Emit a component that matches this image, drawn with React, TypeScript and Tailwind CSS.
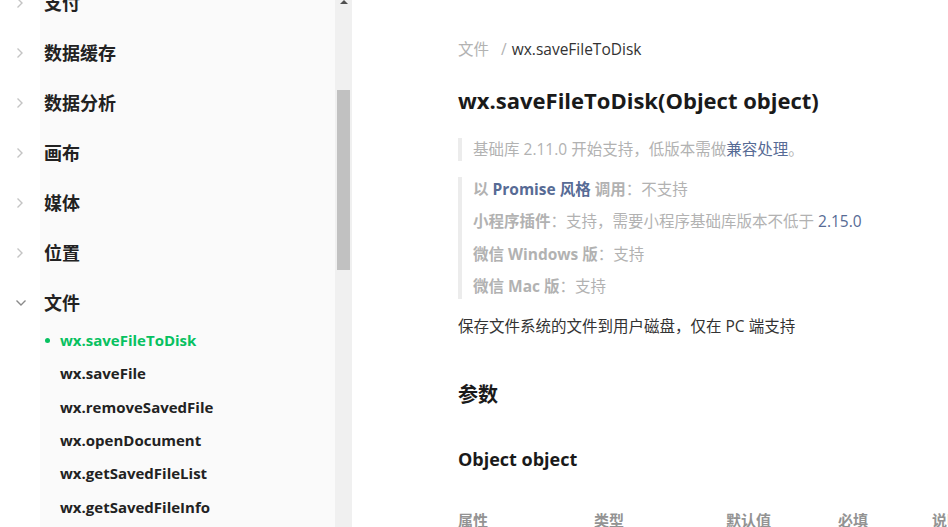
import React from "react";

const FONT = { fontFamily: '"Open Sans", "Noto Sans CJK SC", sans-serif' };

function ChevronRight() {
  return (
    <svg width="8" height="12" viewBox="0 0 8 12" fill="none">
      <path d="M1.5 1.5 L6 6 L1.5 10.5" stroke="#c4c4c4" strokeWidth="1.4" />
    </svg>
  );
}
function ChevronDown() {
  return (
    <svg width="12" height="8" viewBox="0 0 12 8" fill="none">
      <path d="M1.5 1.5 L6 6 L10.5 1.5" stroke="#8a8a8a" strokeWidth="1.4" />
    </svg>
  );
}

const groups = ["支付", "数据缓存", "数据分析", "画布", "媒体", "位置"];
const subs = ["wx.saveFile", "wx.removeSavedFile", "wx.openDocument", "wx.getSavedFileList", "wx.getSavedFileInfo"];

export default function App() {
  return (
    <div className="flex h-[527px] w-[948px] overflow-hidden bg-white" style={FONT}>
      {/* sidebar */}
      <div className="flex h-full w-[335px] shrink-0 bg-[linear-gradient(to_right,#ffffff_40px,#fafafa_40px)] overflow-hidden">
        <div className="-mt-[22px] flex w-full flex-col">
          {groups.map((g) => (
            <div key={g} className="flex h-[50px] items-center">
              <div className="flex w-[44px] shrink-0 pl-[16px]">
                <ChevronRight />
              </div>
              <span className="text-[18px] font-bold text-[#222]">{g}</span>
            </div>
          ))}
          <div className="flex h-[50px] items-center">
            <div className="flex w-[44px] shrink-0 pl-[15px]">
              <ChevronDown />
            </div>
            <span className="text-[18px] font-bold text-[#222]">文件</span>
          </div>
          <div className="-mt-[4px] flex h-[33px] items-center pl-[45px]">
            <span className="mr-[10px] h-[5px] w-[5px] rounded-full bg-[#07c160]" />
            <span className="text-[15px] font-bold text-[#07c160]">wx.saveFileToDisk</span>
          </div>
          {subs.map((s) => (
            <div key={s} className="flex h-[33.3px] items-center pl-[60px]">
              <span className="text-[15px] font-bold text-[#222]">{s}</span>
            </div>
          ))}
        </div>
      </div>
      {/* scrollbar */}
      <div className="relative flex h-full w-[17px] shrink-0 flex-col items-center bg-[#f0f0f0]">
        <div className="h-0 w-0 border-x-[4px] border-b-[4px] border-x-transparent border-b-[#505050]" />
        <div className="mt-[86px] h-[180px] w-[13px] bg-[#c1c1c1]" />
      </div>
      {/* main */}
      <div className="flex min-w-0 flex-1 flex-col pl-[106px] pt-[40px]">
        <div className="flex h-[20px] items-center whitespace-nowrap text-[15.5px]">
          <span className="text-[#b2b2b2]">文件</span>
          <span className="ml-[12px] mr-[5px] text-[#b2b2b2]">/</span>
          <span className="text-[#333]">wx.saveFileToDisk</span>
        </div>
        <h1 className="mt-[25px] h-[30px] whitespace-nowrap text-[22px] font-bold leading-[30px] text-[#1a1a1a]">
          wx.saveFileToDisk(Object object)
        </h1>
        <div className="mt-[23px] flex h-[25px] items-center whitespace-nowrap border-l-[4px] border-[#ececec] pl-[11px] text-[15.5px] text-[#b2b2b2]">
          基础库 2.11.0 开始支持，低版本需做<span className="text-[#576b95]">兼容处理</span>。
        </div>
        <div className="mt-[16px] flex flex-col gap-[8.5px] whitespace-nowrap border-l-[4px] border-[#ececec] pl-[11px] text-[15.5px] text-[#b2b2b2]">
          <div className="flex h-[24px] items-center">
            <span className="font-bold">以&nbsp;</span>
            <span className="font-bold text-[#576b95]">Promise 风格</span>
            <span className="font-bold">&nbsp;调用</span>
            <span>：不支持</span>
          </div>
          <div className="flex h-[24px] items-center">
            <span className="font-bold">小程序插件</span>
            <span>：支持，需要小程序基础库版本不低于&nbsp;</span>
            <span className="text-[#576b95]">2.15.0</span>
          </div>
          <div className="flex h-[24px] items-center">
            <span className="font-bold">微信 Windows 版</span>
            <span>：支持</span>
          </div>
          <div className="flex h-[24px] items-center">
            <span className="font-bold">微信 Mac 版</span>
            <span>：支持</span>
          </div>
        </div>
        <p className="mt-[17px] h-[20px] whitespace-nowrap text-[15.5px] leading-[20px] text-[#333]">
          保存文件系统的文件到用户磁盘，仅在 PC 端支持
        </p>
        <h2 className="mt-[45px] h-[28px] text-[20px] font-bold leading-[28px] text-[#1a1a1a]">参数</h2>
        <h3 className="mt-[37px] h-[26px] whitespace-nowrap text-[18px] font-bold leading-[26px] text-[#1a1a1a]">
          Object object
        </h3>
        <div className="mt-[38px] flex h-[20px] items-center whitespace-nowrap text-[15px] font-bold text-[#939393]">
          <span className="w-[136px] shrink-0">属性</span>
          <span className="w-[132px] shrink-0">类型</span>
          <span className="w-[112px] shrink-0">默认值</span>
          <span className="w-[94px] shrink-0">必填</span>
          <span className="shrink-0">说明</span>
        </div>
      </div>
    </div>
  );
}
